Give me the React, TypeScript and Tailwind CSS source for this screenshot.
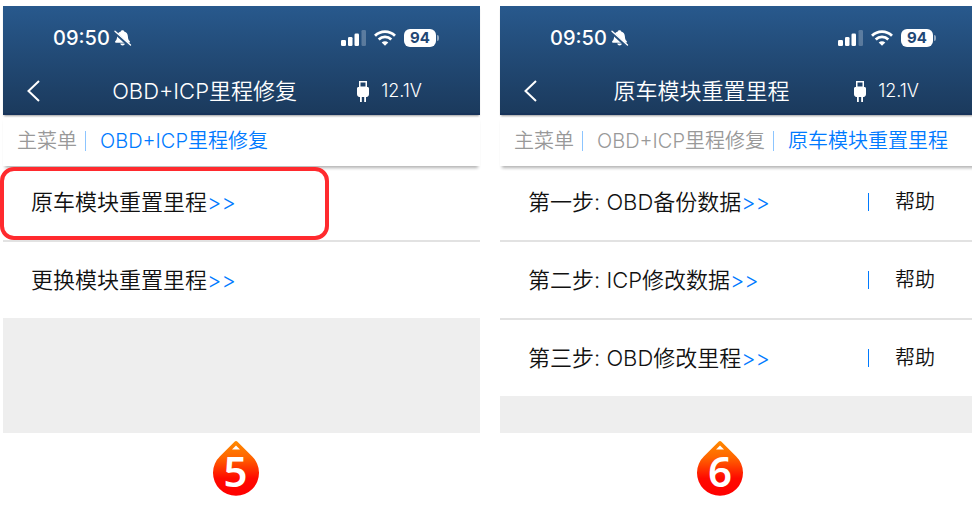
import React from "react";

type Step = {
  label: string;
  help?: boolean;
  marked?: boolean;
};

type ScreenProps = {
  title: string;
  crumbs: string[];
  steps: Step[];
};

const BellOff = () => (
  <svg width="18" height="18" viewBox="0 0 18 18" fill="#fff">
    <path d="M8.5 1.2c.9 0 1.5.5 1.7 1.2 2.4.7 3.6 2.5 3.7 5 .1 2.3.6 3.4 1.7 4.6.8.9.4 1.7-.7 1.7H2.1c-1.1 0-1.5-.8-.7-1.7 1.1-1.2 1.6-2.3 1.7-4.6.1-2.5 1.3-4.3 3.7-5 .2-.7.8-1.2 1.7-1.2z" />
    <path d="M6.2 14.6h4.8c-.3 1.200-1.200 1.900-2.400 1.900s-2.100-.7-2.400-1.900z" />
    <path d="M.4 3.2L15.500 16.800" stroke="#275280" strokeWidth="3" />
    <path d="M1 2.2L16.5 16" stroke="#fff" strokeWidth="1.400" strokeLinecap="round" />
  </svg>
);

const Signal = () => (
  <svg width="25" height="16" viewBox="0 0 25 16" fill="#fff">
    <rect x="0" y="10" width="5" height="6" rx="1.3" />
    <rect x="7" y="7" width="4.5" height="9" rx="1.3" />
    <rect x="13.5" y="3.5" width="4.5" height="12.5" rx="1.3" />
    <rect x="20.5" y="0" width="4.5" height="16" rx="1.3" opacity="0.25" />
  </svg>
);

const Wifi = () => (
  <svg width="22" height="16" viewBox="0 0 22 16" fill="none" stroke="#fff" strokeWidth="2.8">
    <path d="M1 5.7C6.6 .2 15.4 .2 21 5.7" />
    <path d="M4.7 9.5c3.6-3.4 9-3.4 12.6 0" />
    <path d="M11 15.8l-3.3-3.3c1.8-1.6 4.8-1.6 6.6 0z" fill="#fff" stroke="none" />
  </svg>
);

const UsbPlug = () => (
  <svg width="12" height="21" viewBox="0 0 12 21" fill="#fff">
    <path
      d="M2 0h8v6h.5c.9 0 1.5.6 1.5 1.5V13c0 1.6-.8 2.6-2 3H2c-1.2-.4-2-1.400-2-3V7.500C0 6.600.6 6 1.500 6H2zM3.500 1.500V5.500h5V1.500z"
      fillRule="evenodd"
    />
    <path d="M3 15.5h1.800V21H3zM7.200 15.500H9V21H7.200z" />
  </svg>
);

const Pin = ({ num }: { num: number }) => (
  <div className="relative h-[55px] w-[46px]">
    <svg width="46" height="55" viewBox="0 0 46 55">
      <defs>
        <linearGradient id={`pin${num}`} x1="0" y1="0" x2="0" y2="1">
          <stop offset="0" stopColor="#ff8a00" />
          <stop offset="0.3" stopColor="#ff6500" />
          <stop offset="0.68" stopColor="#ff0a00" />
          <stop offset="1" stopColor="#ff0000" />
        </linearGradient>
      </defs>
      <path d="M21.5 .8c1-1 2-1 3 0L39 15.3A23 23 0 1 1 7 15.3z" fill={`url(#pin${num})`} />
      <path d="M23 4.500L27 8.500h-8z" fill="#fff" />
    </svg>
    <span className="absolute inset-x-0 top-[6px] text-center font-['Noto_Sans','Open_Sans',sans-serif] text-[42px] leading-[48px] font-semibold text-white">
      {num}
    </span>
  </div>
);

const StatusBar = () => (
  <div className="flex h-16 items-center justify-between pr-[41px] pl-[50px] text-white">
    <div className="flex items-center gap-1">
      <span className="text-[20px] leading-6 font-medium">09:50</span>
      <BellOff />
    </div>
    <div className="flex items-center gap-2">
      <Signal />
      <Wifi />
      <div className="flex items-center gap-px">
        <span className="flex h-[18px] w-8 items-center justify-center rounded-md bg-white text-[15px] font-bold text-[#1f4775]">
          94
        </span>
        <span className="h-[6px] w-[2px] rounded-r-full bg-white/50"></span>
      </div>
    </div>
  </div>
);

const Screen = ({ title, crumbs, steps }: ScreenProps) => {
  return (
    <section className="flex min-h-[427px] flex-col bg-[#eeeeee]">
      <header className="relative z-20 border-b-2 border-[#17335a] bg-linear-to-b from-[#28598d] to-[#1b3a5d] shadow-[0_2px_2px_-1px_rgba(0,0,0,0.4)]">
        <StatusBar />
        <div className="flex h-[43px] items-center pr-[58px] pb-px pl-6 text-white">
          <button aria-label="返回">
            <svg width="13" height="22" viewBox="0 0 13 22" fill="none" stroke="#fff" strokeWidth="2">
              <path d="M12 1L1.5 11L12 21" />
            </svg>
          </button>
          <h1 className="flex-1 pl-3 text-center text-[22px] leading-8 font-[350]">{title}</h1>
          <div className="flex items-center gap-3">
            <UsbPlug />
            <span className="text-[18px] leading-6 font-[350]">12.1V</span>
          </div>
        </div>
      </header>

      <nav className="relative z-10 flex h-[51px] items-center bg-white pl-[14px] text-[20px] leading-8 font-[350] whitespace-nowrap shadow-[0_4px_3px_-2px_rgba(0,0,0,0.3)]">
        {crumbs.map((crumb, i) => (
          <React.Fragment key={crumb}>
            {i > 0 && <span className="mr-[14px] ml-2 h-5 w-px bg-[#8cc5ff]"></span>}
            <a href="#" className={i === crumbs.length - 1 ? "text-[#007aff]" : "text-[#999999]"}>
              {crumb}
            </a>
          </React.Fragment>
        ))}
      </nav>

      <ul className="-mt-0.5 divide-y-2 divide-[#e2e2e2] bg-white text-[#111111]">
        {steps.map((step) => (
          <li
            key={step.label}
            className="relative flex h-[78px] items-center justify-between pr-[42px] pl-7 last:h-[76px]"
          >
            <a href="#" className="text-[22px] leading-8 font-[350]">
              {step.label}
              <span className="text-[#007aff]">&gt;&gt;</span>
            </a>
            {step.help && (
              <div className="flex items-center gap-[26px]">
                <span className="h-[18px] w-px bg-[#007aff]"></span>
                <button className="text-[20px] leading-8 font-[350]">帮助</button>
              </div>
            )}
            {step.marked && (
              <span className="absolute top-[3px] -left-[3px] z-20 h-[73px] w-[329px] rounded-[14px] border-4 border-[#ff2a2e]"></span>
            )}
          </li>
        ))}
      </ul>
    </section>
  );
};

const App = () => {
  return (
    <main className="overflow-hidden bg-white font-['Inter','Noto_Sans_CJK_SC',sans-serif]">
      <div className="-mr-[5px] grid grid-cols-2 gap-x-5 gap-y-2 pt-[6px] pb-5 pl-[3px]">
        <Screen
          title="OBD+ICP里程修复"
          crumbs={["主菜单", "OBD+ICP里程修复"]}
          steps={[{ label: "原车模块重置里程", marked: true }, { label: "更换模块重置里程" }]}
        />
        <Screen
          title="原车模块重置里程"
          crumbs={["主菜单", "OBD+ICP里程修复", "原车模块重置里程"]}
          steps={[
            { label: "第一步: OBD备份数据", help: true },
            { label: "第二步: ICP修改数据", help: true },
            { label: "第三步: OBD修改里程", help: true },
          ]}
        />
        <div className="flex justify-center pr-3">
          <Pin num={5} />
        </div>
        <div className="flex justify-center pr-[37px]">
          <Pin num={6} />
        </div>
      </div>
    </main>
  );
};

export default App;
